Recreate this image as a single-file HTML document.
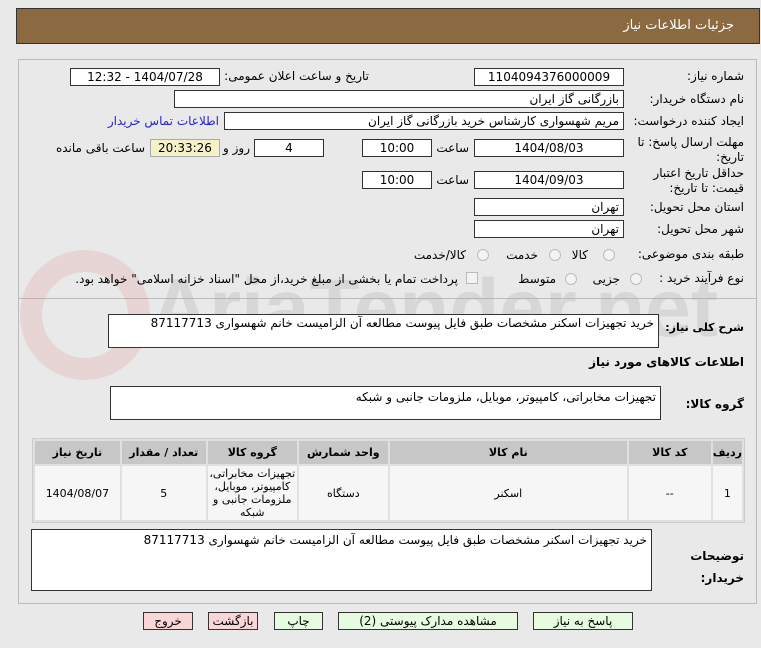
<!DOCTYPE html>
<html><head><meta charset="utf-8"><style>
*{box-sizing:border-box;margin:0;padding:0}
body{width:761px;height:648px;background:#e9e9e9;position:relative;overflow:hidden;font-family:Tahoma,"DejaVu Sans","Noto Sans CJK SC",sans-serif;font-size:12px;color:#000;direction:rtl}
.a{position:absolute;white-space:nowrap}
.in{position:absolute;background:#fff;border:1px solid #333;height:18px;line-height:16px;padding:0 4px;font-size:12px}
.c{text-align:center}
.r{text-align:right}
.lbl{position:absolute;white-space:nowrap;font-size:12px}
.rad{position:absolute;width:12px;height:12px;border-radius:50%;border:1px solid #bbb;background:#f3f3f3}
.btn{position:absolute;top:612px;height:18px;border:1px solid #333;line-height:16px;text-align:center;font-size:12px}
table{position:absolute;left:32px;top:438px;width:713px;border-collapse:separate;border-spacing:2px;background:#e0e0e0;border:1px solid #ccc}
th{background:#c7c7c7;height:23px;font-size:11px;font-weight:bold}
td{background:#f6f6f6;height:54px;text-align:center;font-size:11px}
</style></head><body>
<div class="a" style="left:16px;top:8px;width:744px;height:36px;background:#8b6a42;border:1px solid #333"></div>
<div class="a" style="right:27px;top:18px;color:#fff;font-size:13px">جزئیات اطلاعات نیاز</div>
<div class="a" style="left:18px;top:59px;width:739px;height:240px;border:1px solid #bbb"></div>
<div class="a" style="left:18px;top:299px;width:739px;height:305px;border:1px solid #bbb;border-top:none"></div>
<div class="a" style="left:20px;top:250px;width:130px;height:130px;border-radius:50%;border:22px solid rgba(220,120,120,.18)"></div>
<div class="a" style="left:150px;top:262px;font-size:82px;font-weight:bold;color:rgba(170,170,170,.28);direction:ltr;font-family:'Liberation Sans',sans-serif">AriaTender.net</div>

<div class="lbl" style="right:17px;top:69px">شماره نیاز:</div>
<div class="in c" style="left:474px;top:68px;width:150px">1104094376000009</div>
<div class="lbl" style="right:392px;top:69px">تاریخ و ساعت اعلان عمومی:</div>
<div class="in c" style="left:70px;top:68px;width:150px">1404/07/28 - 12:32</div>

<div class="lbl" style="right:17px;top:92px">نام دستگاه خریدار:</div>
<div class="in r" style="left:174px;top:90px;width:450px">بازرگانی گاز ایران</div>

<div class="lbl" style="right:17px;top:114px">ایجاد کننده درخواست:</div>
<div class="in r" style="left:224px;top:112px;width:400px">مریم شهسواری کارشناس خرید بازرگانی گاز ایران</div>
<div class="lbl" style="right:542px;top:114px;color:#2424d6">اطلاعات تماس خریدار</div>

<div class="lbl" style="right:17px;top:135px;line-height:15px;text-align:right">مهلت ارسال پاسخ: تا<br>تاریخ:</div>
<div class="in c" style="left:474px;top:139px;width:150px">1404/08/03</div>
<div class="lbl" style="right:292px;top:141px">ساعت</div>
<div class="in c" style="left:362px;top:139px;width:70px">10:00</div>
<div class="in c" style="left:254px;top:139px;width:70px">4</div>
<div class="lbl" style="right:511px;top:141px">روز و</div>
<div class="in c" style="left:150px;top:139px;width:70px;background:#f5f1c8;border-color:#aaa">20:33:26</div>
<div class="lbl" style="right:616px;top:141px">ساعت باقی مانده</div>

<div class="lbl" style="right:17px;top:166px;line-height:15px;text-align:right">حداقل تاریخ اعتبار<br>قیمت: تا تاریخ:</div>
<div class="in c" style="left:474px;top:171px;width:150px">1404/09/03</div>
<div class="lbl" style="right:292px;top:173px">ساعت</div>
<div class="in c" style="left:362px;top:171px;width:70px">10:00</div>

<div class="lbl" style="right:17px;top:200px">استان محل تحویل:</div>
<div class="in r" style="left:474px;top:198px;width:150px">تهران</div>
<div class="lbl" style="right:17px;top:222px">شهر محل تحویل:</div>
<div class="in r" style="left:474px;top:220px;width:150px">تهران</div>

<div class="lbl" style="right:17px;top:247px">طبقه بندی موضوعی:</div>
<div class="rad" style="left:603px;top:249px"></div><div class="lbl" style="right:173px;top:248px">کالا</div>
<div class="rad" style="left:549px;top:249px"></div><div class="lbl" style="right:223px;top:248px">خدمت</div>
<div class="rad" style="left:477px;top:249px"></div><div class="lbl" style="right:295px;top:248px">کالا/خدمت</div>

<div class="lbl" style="right:17px;top:271px">نوع فرآیند خرید :</div>
<div class="rad" style="left:630px;top:273px"></div><div class="lbl" style="right:141px;top:272px">جزیی</div>
<div class="rad" style="left:565px;top:273px"></div><div class="lbl" style="right:205px;top:272px">متوسط</div>
<div class="a" style="left:466px;top:272px;width:12px;height:12px;border:1px solid #bbb;background:#f3f3f3"></div>
<div class="lbl" style="right:303px;top:272px">پرداخت تمام یا بخشی از مبلغ خرید،از محل "اسناد خزانه اسلامی" خواهد بود.</div>

<div class="lbl" style="right:17px;top:321px;font-weight:bold;font-size:11px">شرح کلی نیاز:</div>
<div class="in r" style="left:108px;top:314px;width:551px;height:34px">خرید تجهیزات اسکنر مشخصات طبق فایل پیوست مطالعه آن الزامیست خانم شهسواری 87117713</div>
<div class="lbl" style="right:17px;top:355px;font-weight:bold">اطلاعات کالاهای مورد نیاز</div>
<div class="lbl" style="right:17px;top:397px;font-weight:bold">گروه کالا:</div>
<div class="in r" style="left:110px;top:386px;width:551px;height:34px;line-height:20px">تجهیزات مخابراتی، کامپیوتر، موبایل، ملزومات جانبی و شبکه</div>

<table>
<tr><th style="width:29px">ردیف</th><th style="width:82px">کد کالا</th><th style="width:237px">نام کالا</th><th style="width:89px">واحد شمارش</th><th style="width:89px">گروه کالا</th><th style="width:84px">تعداد / مقدار</th><th>تاریخ نیاز</th></tr>
<tr><td>1</td><td>--</td><td>اسکنر</td><td>دستگاه</td><td style="line-height:13px">تجهیزات مخابراتی، کامپیوتر، موبایل، ملزومات جانبی و شبکه</td><td>5</td><td>1404/08/07</td></tr>
</table>

<div class="in r" style="left:31px;top:529px;width:621px;height:62px;line-height:20px">خرید تجهیزات اسکنر مشخصات طبق فایل پیوست مطالعه آن الزامیست خانم شهسواری 87117713</div>
<div class="lbl" style="right:17px;top:545px;font-weight:bold;line-height:22px;text-align:right">توضیحات<br>خریدار:</div>

<div class="btn" style="left:533px;width:100px;background:#e6fbe0">پاسخ به نیاز</div>
<div class="btn" style="left:338px;width:180px;background:#e6fbe0">مشاهده مدارک پیوستی (2)</div>
<div class="btn" style="left:274px;width:49px;background:#e6fbe0">چاپ</div>
<div class="btn" style="left:208px;width:50px;background:#fbd6d6">بازگشت</div>
<div class="btn" style="left:143px;width:50px;background:#fbd6d6">خروج</div>
</body></html>
